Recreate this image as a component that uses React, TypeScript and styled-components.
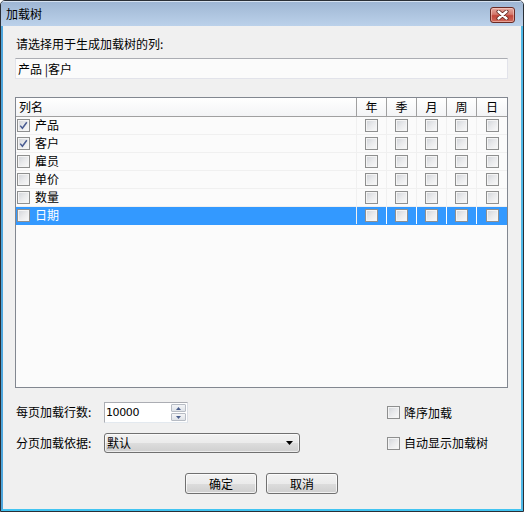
import styled, { createGlobalStyle } from 'styled-components'

const GlobalStyle = createGlobalStyle`
    html, body {
        margin: 0;
        padding: 0;
        background: #ffffff;
    }
    body {
        font-family: "Noto Sans CJK SC", "Liberation Sans", sans-serif;
        font-size: 12px;
        color: #000;
    }
`

const Window = styled.div`
    width: 524px;
    height: 512px;
    box-sizing: border-box;
    border: 1px solid #2a2f36;
    border-radius: 5px 5px 0 0;
    display: flex;
    flex-direction: column;
    overflow: hidden;
    background: #bcd2ea;
`

const TitleBar = styled.div`
    height: 25px;
    flex: 0 0 25px;
    display: flex;
    align-items: center;
    justify-content: space-between;
    padding: 0 8px 0 5px;
    background: linear-gradient(to bottom, #9db5d3 0%, #aac1dc 40%, #bbd1ea 100%);
    box-shadow: inset 0 1px 0 #d6e2f0;
`

const TitleText = styled.span`
    font-size: 12px;
    line-height: 16px;
    padding-top: 1px;
    color: #000;
`

const CloseButton = styled.div`
    width: 25px;
    height: 16px;
    box-sizing: border-box;
    margin-top: 2px;
    border: 1px solid #6a2a24;
    border-radius: 3px;
    background: linear-gradient(to bottom, #e6a99f 0%, #d47a6e 45%, #c2463a 55%, #cf6a5c 100%);
    box-shadow: inset 0 0 0 1px rgba(255, 220, 210, 0.5);
    display: flex;
    align-items: center;
    justify-content: center;
`

const Frame = styled.div`
    flex: 1;
    display: flex;
    border-left: 2px solid #4fa6dc;
    border-right: 2px solid #4fb9e8;
    border-bottom: 2px solid #41c4f1;
`

const Client = styled.div`
    flex: 1;
    background: #f0f0f0;
    padding: 10px 13px 0 12px;
    display: flex;
    flex-direction: column;
`

const Prompt = styled.div`
    line-height: 16px;
    padding-left: 1px;
`

const TextBox = styled.div`
    margin-top: 6px;
    height: 21px;
    box-sizing: border-box;
    border: 1px solid #e2e3ea;
    border-top-color: #abadb3;
    background: #fbfbfb;
    padding: 0 2px;
    line-height: 19px;
`

const List = styled.div`
    margin-top: 18px;
    height: 291px;
    box-sizing: border-box;
    border: 1px solid #828790;
    background: #fbfbfb;
    display: flex;
    flex-direction: column;
`

const HeaderRow = styled.div`
    display: flex;
    height: 19px;
    box-sizing: border-box;
    border-bottom: 1px solid #a0a0a0;
    background: linear-gradient(to bottom, #ffffff, #f3f4f6);
`

const HeaderCell = styled.div<{ $wide?: boolean; $last?: boolean }>`
    box-sizing: border-box;
    flex: ${({ $wide }) => ($wide ? '1' : '0 0 30px')};
    border-right: ${({ $last }) => ($last ? 'none' : '1px solid #a0a0a0')};
    text-align: ${({ $wide }) => ($wide ? 'left' : 'center')};
    padding-left: ${({ $wide }) => ($wide ? '3px' : '0')};
    line-height: 17px;
`

const Row = styled.div<{ $selected?: boolean }>`
    display: flex;
    height: 18px;
    box-sizing: border-box;
    border-bottom: 1px solid ${({ $selected }) => ($selected ? '#3399ff' : '#f0f0f0')};
    background: ${({ $selected }) => ($selected ? '#3399ff' : 'transparent')};
    color: ${({ $selected }) => ($selected ? '#ffffff' : '#000000')};
`

const NameCell = styled.div`
    flex: 1;
    display: flex;
    align-items: center;
    gap: 5px;
    padding-left: 1px;
    box-sizing: border-box;
    border-right: 1px solid #f0f0f0;
`

const NameText = styled.span`
    line-height: 15px;
    padding-bottom: 2px;
`

const FlagCell = styled.div<{ $selected?: boolean; $last?: boolean }>`
    flex: 0 0 30px;
    box-sizing: border-box;
    display: flex;
    align-items: center;
    justify-content: center;
    border-right: ${({ $last, $selected }) =>
        $last ? 'none' : `1px solid ${$selected ? '#ffffff' : '#f0f0f0'}`};
`

const Box = styled.span`
    width: 13px;
    height: 13px;
    flex: 0 0 13px;
    box-sizing: border-box;
    border: 1px solid #8e8f8f;
    background: linear-gradient(135deg, #d0d3d8 0%, #e9eaec 50%, #fafafa 100%);
    box-shadow: inset 0 0 0 1px #f4f4f4;
    display: inline-flex;
    align-items: center;
    justify-content: center;
`

const Form = styled.div`
    margin-top: 14px;
    display: grid;
    grid-template-columns: 89px 283px auto;
    row-gap: 10px;
    align-items: center;
`

const FieldLabel = styled.div`
    padding-left: 1px;
    line-height: 16px;
    padding-bottom: 1px;
`

const Spin = styled.div`
    width: 84px;
    height: 21px;
    box-sizing: border-box;
    border: 1px solid #abadb3;
    border-right-color: #dbdfe6;
    border-bottom-color: #e3e9ef;
    background: #ffffff;
    display: flex;
    align-items: center;
    justify-content: space-between;
    padding: 0 1px 0 1px;
`

const SpinValue = styled.span`
    font-family: "DejaVu Sans", "Liberation Sans", sans-serif;
    font-size: 11px;
    letter-spacing: -0.4px;
`

const SpinButtons = styled.div`
    display: flex;
    flex-direction: column;
    gap: 1px;
    width: 15px;
`

const SpinButton = styled.div`
    height: 8px;
    box-sizing: border-box;
    border: 1px solid #b7bcc4;
    border-radius: 1px;
    background: linear-gradient(to bottom, #f4f5f7, #dfe3e8);
    display: flex;
    align-items: center;
    justify-content: center;
`

const Combo = styled.div`
    width: 196px;
    height: 20px;
    box-sizing: border-box;
    border: 1px solid #707070;
    border-radius: 3px;
    background: linear-gradient(to bottom, #f2f2f2 0%, #ebebeb 50%, #dddddd 51%, #cfcfcf 100%);
    box-shadow: inset 0 0 0 1px rgba(255, 255, 255, 0.6);
    display: flex;
    align-items: center;
    justify-content: space-between;
    padding: 0 6px 0 2px;
    line-height: 16px;
`

const Option = styled.label`
    display: flex;
    align-items: center;
    gap: 4px;
    line-height: 16px;
`

const Buttons = styled.div`
    margin-top: 20px;
    display: flex;
    justify-content: center;
    gap: 9px;
`

const PushButton = styled.div`
    width: 72px;
    height: 21px;
    box-sizing: border-box;
    border: 1px solid #707070;
    border-radius: 3px;
    background: linear-gradient(to bottom, #f2f2f2 0%, #ebebeb 50%, #dddddd 51%, #cfcfcf 100%);
    box-shadow: inset 0 0 0 1px rgba(255, 255, 255, 0.7);
    display: flex;
    align-items: center;
    justify-content: center;
    line-height: 16px;
`

const Check = ({ checked }: { checked?: boolean }) => (
    <Box>
        {checked && (
            <svg width="9" height="9" viewBox="0 0 9 9">
                <path
                    d="M1.2 4.6 L3.4 7.3 L7.8 1.2"
                    fill="none"
                    stroke="#4a5c92"
                    strokeWidth="1.5"
                />
            </svg>
        )}
    </Box>
)

const rows = [
    { name: '产品', checked: true },
    { name: '客户', checked: true },
    { name: '雇员' },
    { name: '单价' },
    { name: '数量' },
    { name: '日期', selected: true },
]

const periods = ['年', '季', '月', '周', '日']

const App = () => {
    return (
        <>
            <GlobalStyle />
            <Window>
                <TitleBar>
                    <TitleText>加载树</TitleText>
                    <CloseButton>
                        <svg width="13" height="10" viewBox="0 0 13 10">
                            <path
                                d="M2.5 1.5 L10.5 8.5 M10.5 1.5 L2.5 8.5"
                                stroke="#5a2018"
                                strokeWidth="4"
                                strokeLinecap="round"
                            />
                            <path
                                d="M2.5 1.5 L10.5 8.5 M10.5 1.5 L2.5 8.5"
                                stroke="#ffffff"
                                strokeWidth="2.4"
                                strokeLinecap="round"
                            />
                        </svg>
                    </CloseButton>
                </TitleBar>
                <Frame>
                    <Client>
                        <Prompt>请选择用于生成加载树的列:</Prompt>
                        <TextBox>产品 |客户</TextBox>
                        <List>
                            <HeaderRow>
                                <HeaderCell $wide>列名</HeaderCell>
                                {periods.map((p, i) => (
                                    <HeaderCell key={p} $last={i === periods.length - 1}>
                                        {p}
                                    </HeaderCell>
                                ))}
                            </HeaderRow>
                            {rows.map((r) => (
                                <Row key={r.name} $selected={r.selected}>
                                    <NameCell>
                                        <Check checked={r.checked} />
                                        <NameText>{r.name}</NameText>
                                    </NameCell>
                                    {periods.map((p, i) => (
                                        <FlagCell
                                            key={p}
                                            $selected={r.selected}
                                            $last={i === periods.length - 1}
                                        >
                                            <Check />
                                        </FlagCell>
                                    ))}
                                </Row>
                            ))}
                        </List>
                        <Form>
                            <FieldLabel>每页加载行数:</FieldLabel>
                            <Spin>
                                <SpinValue>10000</SpinValue>
                                <SpinButtons>
                                    <SpinButton>
                                        <svg width="5" height="3" viewBox="0 0 5 3">
                                            <path d="M0 3 L2.5 0 L5 3 Z" fill="#4a5e8c" />
                                        </svg>
                                    </SpinButton>
                                    <SpinButton>
                                        <svg width="5" height="3" viewBox="0 0 5 3">
                                            <path d="M0 0 L2.5 3 L5 0 Z" fill="#4a5e8c" />
                                        </svg>
                                    </SpinButton>
                                </SpinButtons>
                            </Spin>
                            <Option>
                                <Check />
                                <span>降序加载</span>
                            </Option>
                            <FieldLabel>分页加载依据:</FieldLabel>
                            <Combo>
                                <span>默认</span>
                                <svg width="7" height="4" viewBox="0 0 7 4">
                                    <path d="M0 0 L7 0 L3.5 4 Z" fill="#000" />
                                </svg>
                            </Combo>
                            <Option>
                                <Check />
                                <span>自动显示加载树</span>
                            </Option>
                        </Form>
                        <Buttons>
                            <PushButton>确定</PushButton>
                            <PushButton>取消</PushButton>
                        </Buttons>
                    </Client>
                </Frame>
            </Window>
        </>
    )
}

export default App
